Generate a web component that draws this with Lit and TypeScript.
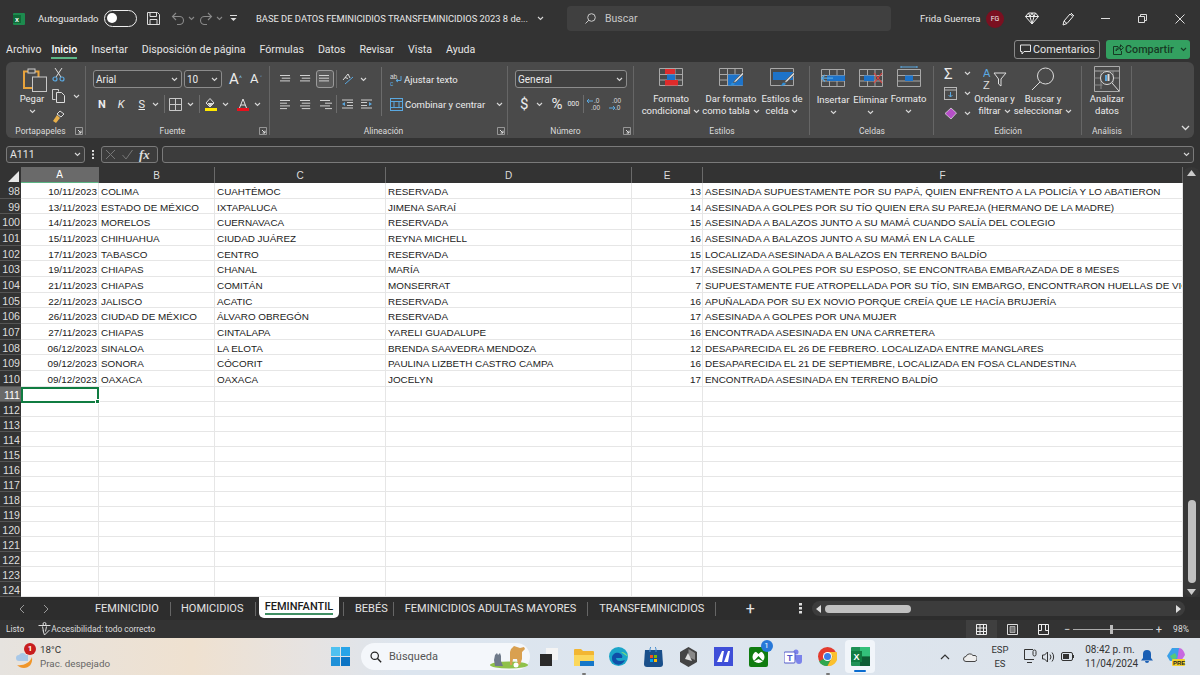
import { LitElement, html, css, svg } from "lit";
import { customElement } from "lit/decorators.js";

const rows: string[][] = [
  ["98","10/11/2023","COLIMA","CUAHTÉMOC","RESERVADA","13","ASESINADA SUPUESTAMENTE POR SU PAPÁ, QUIEN ENFRENTO A LA POLICÍA Y LO ABATIERON"],
  ["99","13/11/2023","ESTADO DE MÉXICO","IXTAPALUCA","JIMENA SARAÍ","14","ASESINADA A GOLPES POR SU TÍO QUIEN ERA SU PAREJA (HERMANO DE LA MADRE)"],
  ["100","14/11/2023","MORELOS","CUERNAVACA","RESERVADA","15","ASESINADA A BALAZOS JUNTO A SU MAMÁ CUANDO SALÍA DEL COLEGIO"],
  ["101","15/11/2023","CHIHUAHUA","CIUDAD JUÁREZ","REYNA MICHELL","16","ASESINADA A BALAZOS JUNTO A SU MAMÁ EN LA CALLE"],
  ["102","17/11/2023","TABASCO","CENTRO","RESERVADA","15","LOCALIZADA ASESINADA A BALAZOS EN TERRENO BALDÍO"],
  ["103","19/11/2023","CHIAPAS","CHANAL","MARÍA","17","ASESINADA A GOLPES POR SU ESPOSO, SE ENCONTRABA EMBARAZADA DE 8 MESES"],
  ["104","21/11/2023","CHIAPAS","COMITÁN","MONSERRAT","7","SUPUESTAMENTE FUE ATROPELLADA POR SU TÍO, SIN EMBARGO, ENCONTRARON HUELLAS DE VIOLENCIA"],
  ["105","22/11/2023","JALISCO","ACATIC","RESERVADA","16","APUÑALADA POR SU EX NOVIO PORQUE CREÍA QUE LE HACÍA BRUJERÍA"],
  ["106","26/11/2023","CIUDAD DE MÉXICO","ÁLVARO OBREGÓN","RESERVADA","17","ASESINADA A GOLPES POR UNA MUJER"],
  ["107","27/11/2023","CHIAPAS","CINTALAPA","YARELI GUADALUPE","16","ENCONTRADA ASESINADA EN UNA CARRETERA"],
  ["108","06/12/2023","SINALOA","LA ELOTA","BRENDA SAAVEDRA MENDOZA","12","DESAPARECIDA EL 26 DE FEBRERO. LOCALIZADA ENTRE MANGLARES"],
  ["109","09/12/2023","SONORA","CÓCORIT","PAULINA LIZBETH CASTRO CAMPA","16","DESAPARECIDA EL 21 DE SEPTIEMBRE, LOCALIZADA EN FOSA CLANDESTINA"],
  ["110","09/12/2023","OAXACA","OAXACA","JOCELYN","17","ENCONTRADA ASESINADA EN TERRENO BALDÍO"],
];
const empties = Array.from({ length: 14 }, (_, i) => String(111 + i));

const chev = (c = "#d8d8d8") => html`<svg class="chev" width="7" height="5" viewBox="0 0 7 5"><path d="M1 1l2.5 2.5L6 1" fill="none" stroke=${c} stroke-width="1.1"/></svg>`;
const launcher = html`<svg class="launch" width="8" height="8" viewBox="0 0 8 8"><path d="M.5.5h7v7h-7z" fill="none" stroke="#aaa" stroke-width=".8"/><path d="M3 3l3 3M6 3.6V6H3.6" fill="none" stroke="#ddd"/></svg>`;
const lines = (a: number[]) => html`<svg width="12" height="11" viewBox="0 0 12 11">${a.map((w, i) => { const x = w < 0 ? 12 + w : w === 8.5 ? 1.75 : 0; return svg`<path d="M${x} ${1.5 + i * 2.7}h${Math.abs(w)}" stroke="#d0d0d0" stroke-width="1"/>`; })}</svg>`;
const tableIcon = (inner: unknown, w = 24, h = 18) => html`<svg width=${w} height=${h} viewBox="0 0 24 18"><path d="M.5.5h23v17H.5zM.5 6.5h23M.5 12h23M8.5.5v17M16 .5v17" fill="none" stroke="#a8a8a8"/>${inner}</svg>`;
const brush = svg`<path d="M24 4l-8 8-2 3 3-1 8-8z" fill="#d0d0d0" stroke="#444" stroke-width=".6"/><path d="M13 14.5c-1 1-.5 2.4-3 3 2 .6 5 .2 6-2z" fill="#2f8fd8"/>`;

@customElement("app-root")
export class AppRoot extends LitElement {
  static styles = css`
    :host { display:block; width:1200px; height:675px; overflow:hidden; font-family:Roboto,"Noto Sans",sans-serif; color:#e6e6e6; background:#333; }
    .page { display:flex; flex-direction:column; height:675px; }
    svg { display:block; flex:none; }

    .title { height:37px; display:flex; align-items:center; font-size:9.6px; padding-left:13px; }
    .title span { white-space:nowrap; }
    .auto { margin-left:13px; width:61px; }
    .toggle { margin-left:5px; width:33px; height:17px; border:1.5px solid #eee; border-radius:9px; box-sizing:border-box; padding:2px; display:flex; }
    .toggle i { width:10px; height:10px; background:#fff; border-radius:50%; display:block; }
    .save { margin-left:10px; }
    .undo { margin-left:11px; }
    .ch4 { margin-left:3px; }
    .redo { margin-left:4px; }
    .cust { margin-left:7px; }
    .doc { margin-left:19px; width:281px; font-size:9.35px; color:#e8e8e8; }
    .docch { margin-left:0; }
    .search { margin-left:23px; margin-top:-1px; width:324px; height:25px; background:#404040; border-radius:4px; display:flex; align-items:center; padding-left:18px; box-sizing:border-box; gap:9px; font-size:10.5px; color:#c8c8c8; }
    .user { margin-left:29px; width:60px; font-size:9.6px; }
    .avatar { margin-left:6px; width:18px; height:18px; background:#7a1020; border-radius:50%; font-size:7px; display:flex; align-items:center; justify-content:center; color:#eee; }
    .tright { margin-left:21px; display:flex; align-items:center; }
    .tright .i2 { margin-left:23px; }
    .tright .i3 { margin-left:26px; }
    .tright .i4 { margin-left:28px; }
    .tright .i5 { margin-left:28px; }

    .menu { height:25px; display:flex; align-items:center; padding:0 10px 0 6px; font-size:10.6px; gap:14px; box-sizing:border-box; }
    .menu > span { white-space:nowrap; }
    .menu .on { position:relative; color:#fff; font-weight:500; margin-left:-4px; }
    .menu .on::after { content:""; position:absolute; left:0; right:0; bottom:-3px; height:2px; background:#5cb585; }
    .mbtns { margin-left:auto; display:flex; gap:6px; }
    .btn { height:19px; border-radius:3px; display:flex; align-items:center; box-sizing:border-box; font-size:10.8px; white-space:nowrap; }
    .com { width:86px; border:1px solid #8a8a8a; padding-left:5px; gap:2px; }
    .shr { width:84px; background:#33a060; color:#173a24; padding:0 3px 0 7px; font-weight:500; gap:1px; }
    .shr svg:last-child { margin-left:auto; }

    .ribbon { height:76px; margin:0 6px; background:#4a4a4a; border-radius:6px; display:flex; font-size:9.5px; color:#ececec; box-sizing:border-box; position:relative; }
    .grp { position:relative; display:flex; flex-direction:column; box-sizing:border-box; }
    .grp::after { content:""; position:absolute; right:0; top:4px; bottom:3px; width:1px; background:#666; }
    .body { height:61px; display:flex; box-sizing:border-box; }
    .lbl { height:15px; display:grid; grid-template-columns:1fr auto; align-items:center; font-size:8.5px; color:#dcdcdc; box-sizing:border-box; }
    .lbl span { text-align:center; }
    .lbl .launch { margin-right:3px; }
    .g1 { width:80px; } .g2 { width:184px; } .g3 { width:238px; } .g4 { width:126px; }
    .g5 { width:176px; } .g6 { width:124px; } .g7 { width:148px; } .g8 { width:50px; }
    .big { display:flex; flex-direction:column; align-items:center; padding-top:6px; line-height:12.4px; text-align:center; white-space:nowrap; box-sizing:border-box; }
    .big .ic { height:25px; display:flex; align-items:flex-start; }
    .big .nl { display:flex; align-items:center; gap:3px; justify-content:center; height:12.4px; }
    .w66 { width:66px; } .w54 { width:54px; } .w48 { width:48px; } .w38 { width:38px; } .w37 { width:37px; } .w39 { width:39px; } .w60 { width:60px; } .w50 { width:50px; }
    .pad4 { padding-left:4px; }
    .down1 { padding-top:7px; }
    .up2 { margin-top:-2px; }
    .g1 .body { padding-left:6px; }
    .paste { width:40px; }
    .paste .ic { padding-left:6px; }
    .clip { display:flex; flex-direction:column; padding-top:6px; gap:7px; }
    .clip div { display:flex; align-items:center; gap:7px; height:14px; }
    .two { display:flex; flex-direction:column; padding-top:8px; box-sizing:border-box; gap:7px; }
    .r { display:flex; align-items:center; height:18px; }
    .sel { height:18px; border:1px solid #8c8c8c; border-radius:3px; box-sizing:border-box; display:flex; align-items:center; justify-content:space-between; padding:0 3px 0 2px; background:#404040; font-size:10px; }
    .g2 .body { padding-left:7px; }
    .fsel { width:89px; } .ssel { width:38px; margin-left:2px; }
    .Agrow { font-size:15px; margin-left:7px; width:21px; position:relative; line-height:16px; }
    .Agrow.sm { font-size:13px; margin-left:0; }
    .Agrow b { position:absolute; left:10px; top:0; font-size:7px; font-weight:400; color:#7cc0ee; }
    .r2 span { font-size:11px; }
    .n { margin-left:5px; font-weight:700; } .k { margin-left:12px; font-style:italic; } .s { margin-left:14px; text-decoration:underline; }
    .s6 { margin-left:7px; }
    .vs { width:1px; height:18px; background:#6c6c6c; }
    .color { display:flex; flex-direction:column; align-items:center; width:12px; line-height:11px; }
    .color i { display:block; width:12px; height:3px; }
    .al { gap:7px; }
    .g3 .body { padding-left:10px; }
    .g3 .two { width:93px; }
    .pressed { width:18px; height:18px; box-sizing:border-box; border:1px solid #9a9a9a; border-radius:3px; background:#5a5a5a; display:flex; align-items:center; justify-content:center; margin:0 2px 0 0; }
    .wrap { margin-left:8px; display:flex; flex-direction:column; padding-top:8px; gap:7px; }
    .wrap .r { gap:2px; white-space:nowrap; }
    .wrap .r2x svg:last-child { margin-left:9px; }
    .g4 .body { padding-left:7px; }
    .nsel { width:112px; }
    .num { font-size:15px; }
    .small { display:flex; flex-direction:column; padding-top:3px; width:42px; padding-left:10px; box-sizing:border-box; gap:3px; }
    .small div { display:flex; align-items:center; gap:7px; height:17px; }
    .col { position:absolute; right:4px; bottom:7px; }

    .formula { height:29px; display:flex; align-items:center; padding:4px 6px 0; box-sizing:border-box; }
    .fbox { height:17px; box-sizing:border-box; border:1px solid #7a7a7a; border-radius:3px; background:#3c3c3c; display:flex; align-items:center; }
    .name { width:79px; justify-content:space-between; padding:0 3px; font-size:10.5px; }
    .dots { width:16px; display:flex; justify-content:center; }
    .fx { width:57px; padding:0 3px; gap:6px; }
    .fx em { font-family:"Liberation Serif",serif; font-weight:700; font-size:13px; color:#ddd; }
    .input { flex:1; margin-left:4px; justify-content:flex-end; padding-right:3px; }

    .sheet { height:430px; display:flex; background:#333; }
    .grid { width:1183px; display:flex; flex-direction:column; position:relative; overflow:hidden; }
    .hdr, .row { display:grid; grid-template-columns:21px 78px 116px 171px 246px 71px 480px; flex:none; }
    .hdr { height:16px; font-size:10px; color:#ddd; font-family:"Liberation Sans",sans-serif; }
    .hdr div { display:flex; align-items:center; justify-content:center; border-right:1px solid #6a6a6a; box-sizing:border-box; }
    .hdr .active { background:#6a6a6a; border-bottom:1px solid #5cb585; color:#fff; }
    .hdr .corner { border:none; align-items:flex-end; justify-content:flex-end; padding:0 2px 1px 0; }
    .row { background:#fff; color:#1a1a1a; font:9.9px/17px "Liberation Sans",Arial,sans-serif; height:15px; white-space:nowrap; }
    .row.tall { height:15.67px; }
    .row > div { border-right:1px solid #e6e6e6; border-bottom:1px solid #e6e6e6; box-sizing:border-box; overflow:hidden; padding-left:2px; }
    .row > .rh { background:#333; color:#ddd; border-right:none; border-bottom:1px solid #555; text-align:right; padding:0 1px 0 0; font-size:10.6px; }
    .row > .rh.cur { background:#6a6a6a; color:#fff; }
    .row > .rt { text-align:right; padding:0 1px 0 0; }
    .selcell { position:absolute; left:21px; top:219.7px; width:78px; height:16px; border:2px solid #107c41; box-sizing:border-box; pointer-events:none; }
    .selcell i { position:absolute; right:-3px; bottom:-3px; background:#107c41; border:1px solid #fff; box-sizing:content-box; display:block; width:3px; height:3px; }
    .fill { flex:1; background:#fff; }
    .vs-bar { width:17px; display:flex; flex-direction:column; align-items:center; padding:3px 0 2px; box-sizing:border-box; background:#383838; border-radius:8px; }
    .thumb { width:8px; height:83px; background:#c0c0c0; border-radius:4px; margin-top:auto; margin-bottom:6px; margin-left:1px; }

    .tabs { height:23px; display:flex; align-items:center; background:#2d2d2d; font-size:11px; color:#e4e4e4; box-sizing:border-box; }
    .arrows { width:95px; display:flex; gap:18px; padding-left:19px; box-sizing:border-box; }
    .tabs .t { white-space:nowrap; }
    .tabsep { width:1px; height:14px; background:#666; }
    .tab1 { width:75px; } .tab2 { width:84px; padding-left:10px; box-sizing:border-box; } .tab4 { padding:0 5px 0 11px; } .tab5 { padding:0 11px; } .tab6 { padding:0 11px; }
    .tab3 { margin:0 4px 0 3px; width:80px; height:21px; background:#fff; color:#1c1c1c; border-radius:0 0 5px 5px; position:relative; display:flex; justify-content:center; padding-top:3px; box-sizing:border-box; font-weight:500; align-self:flex-start; }
    .tab3::after { content:""; position:absolute; left:6px; right:6px; bottom:3px; height:2px; background:#3f8f63; }
    .plus { margin-left:23px; font-size:16px; width:22px; text-align:center; line-height:16px; }
    .vd { margin-left:38px; }
    .hs { margin-left:10px; width:373px; height:15px; background:#3c3c3c; border-radius:8px; display:flex; align-items:center; padding:0 4px; box-sizing:border-box; }
    .hthumb { width:86px; height:8px; background:#c0c0c0; border-radius:4px; margin-left:4px; }
    .hs svg:last-child { margin-left:auto; }

    .status { height:18px; display:flex; align-items:center; background:#333; font-size:8.4px; color:#ddd; padding-left:6px; box-sizing:border-box; white-space:nowrap; }
    .acc { margin-left:14px; margin-right:0; }
    .views { margin-left:auto; display:flex; align-items:stretch; height:18px; }
    .views div { width:31px; display:flex; align-items:center; justify-content:center; }
    .views .v1 { background:#3f3f3f; }
    .zoom { margin-left:5px; width:98px; display:flex; align-items:center; gap:3px; font-size:11px; }
    .track { flex:1; height:1px; background:#aaa; position:relative; }
    .track i { position:absolute; left:37px; top:-4px; width:3px; height:9px; background:#bbb; display:block; }
    .pct { width:38px; text-align:center; font-size:8.5px; }

    .bar { height:37px; background:linear-gradient(90deg,#e6e3df 0,#efe1d0 16%,#e6e3e2 26%,#dce5ef 34%,#dde5ee 70%,#dce2e9 100%); color:#333; display:flex; align-items:center; font-size:9.8px; box-sizing:border-box; position:relative; }
    .wx { width:331px; display:flex; align-items:center; padding-left:16px; box-sizing:border-box; gap:5px; line-height:14px; }
    .wx small { font-size:9.8px; color:#666; display:block; white-space:nowrap; }
    .wicon { position:relative; width:19px; height:26px; }
    .badge { position:absolute; left:8px; top:-1px; width:12px; height:12px; border-radius:50%; background:#c81e1e; color:#fff; font-size:8px; line-height:12px; text-align:center; font-weight:700; }
    .pill { margin-left:11px; width:169px; height:27px; border-radius:14px; background:#f4f7fb; display:flex; align-items:center; padding:0 1px 0 9px; box-sizing:border-box; gap:7px; font-size:11px; color:#555; }
    .pill svg:last-child { margin-left:auto; }
    .apps { margin-left:2px; display:flex; align-items:center; }
    .app { width:34.8px; height:37px; display:flex; align-items:center; justify-content:center; position:relative; }
    .app.act { background:#f1f5fa; border-radius:4px; height:33px; width:30px; }
    .app.act::after { content:""; position:absolute; left:9px; right:9px; bottom:1px; height:2px; background:#0a6cd0; border-radius:1px; }
    .dot::after { content:""; position:absolute; left:50%; margin-left:-2px; bottom:0; width:4px; height:2px; background:#777; border-radius:1px; }
    .n1 { position:absolute; right:3px; top:2px; width:12px; height:12px; background:#2878d8; color:#fff; border-radius:50%; font-size:8px; line-height:12px; text-align:center; }
    .tray { margin-left:auto; display:flex; align-items:center; padding-right:14px; }
    .lang { margin:0 0 0 8px; width:30px; text-align:center; line-height:14px; font-size:9.5px; }
    .clock { margin-left:11px; width:50px; text-align:center; line-height:14px; font-size:10px; white-space:nowrap; }
    .m13 { margin-left:13px; } .m9 { margin-left:9px; } .m5 { margin-left:5px; } .m6 { margin-left:6px; } .m14 { margin-left:14px; }
  `;

  render() {
    return html`<div class="page">
      ${this.titleBar()}
      ${this.menu()}
      ${this.ribbon()}
      ${this.formula()}
      ${this.sheet()}
      ${this.tabs()}
      ${this.status()}
      ${this.taskbar()}
    </div>`;
  }

  titleBar() {
    return html`<div class="title">
      <svg width="12" height="12" viewBox="0 0 12 12"><rect width="12" height="12" rx="1" fill="#1d8a4e"/><rect x="0" y="2" width="8" height="8" fill="#0f6b38"/><text x="2" y="8.5" font-size="7" font-weight="700" fill="#fff" font-family="Liberation Sans">x</text></svg>
      <span class="auto">Autoguardado</span>
      <div class="toggle"><i></i></div>
      <svg class="save" width="13" height="13" viewBox="0 0 13 13"><path d="M.5.5h10l2 2v10H.5zM3 .5v4h6.500v-4M3 12.500v-5h7v5" fill="none" stroke="#ddd"/></svg>
      <svg class="undo" width="14" height="13" viewBox="0 0 14 13"><path d="M5 1L1.500 4.500 5 8M1.500 4.500h7a4 4 0 010 8H6" fill="none" stroke="#8a8a8a" stroke-width="1.100"/></svg>
      <span class="ch4">${chev("#888")}</span>
      <svg class="redo" width="14" height="13" viewBox="0 0 14 13"><path d="M9 1l3.500 3.500L9 8M12.500 4.500h-7a4 4 0 000 8H8" fill="none" stroke="#8a8a8a" stroke-width="1.100"/></svg>
      <span class="ch4">${chev("#888")}</span>
      <svg class="cust" width="7" height="7" viewBox="0 0 7 7"><path d="M0 .5h7" stroke="#ddd"/><path d="M.5 3l3 3 3-3z" fill="#ddd"/></svg>
      <span class="doc">BASE DE DATOS FEMINICIDIOS TRANSFEMINICIDIOS 2023 8 de... </span>
      <span class="docch">${chev()}</span>
      <div class="search"><svg width="11" height="11" viewBox="0 0 11 11"><circle cx="6.500" cy="4.500" r="3.800" fill="none" stroke="#ccc"/><path d="M3.800 7.200L.5 10.500" stroke="#ccc"/></svg><span>Buscar</span></div>
      <span class="user">Frida Guerrera</span>
      <div class="avatar">FG</div>
      <div class="tright">
        <svg width="14" height="13" viewBox="0 0 14 13"><path d="M3.500 1h7L13.500 4.500 7 12 .5 4.500zM.5 4.500h13M5 4.500L7 12l2-7.500M3.500 1L5 4.500 7 1l2 3.500L10.500 1" fill="none" stroke="#eee"/></svg>
        <svg class="i2" width="13" height="14" viewBox="0 0 13 14"><path d="M1 13l1-4 6-7 3 2.500-6 7zM9 1l3 3M2 9l3 2.500" fill="none" stroke="#eee"/></svg>
        <svg class="i3" width="9" height="1" viewBox="0 0 9 1"><path d="M0 .5h9" stroke="#ddd"/></svg>
        <svg class="i4" width="9" height="9" viewBox="0 0 9 9"><path d="M.5 2.500h6v6h-6zM2.500 2.500v-2h6v6h-2" fill="none" stroke="#ddd"/></svg>
        <svg class="i5" width="10" height="10" viewBox="0 0 10 10"><path d="M.5.5l9 9M9.500.5l-9 9" stroke="#ddd"/></svg>
      </div>
    </div>`;
  }

  menu() {
    return html`<div class="menu">
      <span>Archivo</span><span class="on">Inicio</span><span>Insertar</span><span>Disposición de página</span><span>Fórmulas</span><span>Datos</span><span>Revisar</span><span>Vista</span><span>Ayuda</span>
      <div class="mbtns">
        <div class="btn com"><svg width="11" height="11" viewBox="0 0 11 11"><path d="M.5 1h10v6.500H4L2 10V7.500H.5z" fill="none" stroke="#e6e6e6"/></svg>Comentarios</div>
        <div class="btn shr"><svg width="11" height="11" viewBox="0 0 11 11"><path d="M5 2.500H.5v8h8V7M3 7c0-2.500 2-4 4.500-4V.8l3 2.800-3 2.800V4.500C5.500 4.500 4 5.500 3 7z" fill="none" stroke="#173a24"/></svg>Compartir${chev("#173a24")}</div>
      </div>
    </div>`;
  }

  lbl(t: string, l = false) {
    return html`<div class="lbl"><span>${t}</span>${l ? launcher : ""}</div>`;
  }

  ribbon() {
    return html`<div class="ribbon">
      <div class="grp g1">
        <div class="body">
          <div class="big paste"><div class="ic">
            <svg width="26" height="24" viewBox="0 0 26 24"><path d="M2 3.500h14.500V20H2z" fill="none" stroke="#e8a33c" stroke-width="2"/><rect x="6" y="1" width="7" height="4" fill="#4a4a4a" stroke="#ccc"/><rect x="10.500" y="9" width="14" height="14.500" fill="#4a4a4a" stroke="#c8c8c8"/></svg>
          </div><span>Pegar</span><span class="nl">${chev()}</span></div>
          <div class="clip">
            <div><svg width="13" height="14" viewBox="0 0 13 14"><path d="M3 0l6 9M10 0L4 9" stroke="#ddd"/><circle cx="3" cy="11" r="2" fill="none" stroke="#5aa8e0" stroke-width="1.200"/><circle cx="10" cy="11" r="2" fill="none" stroke="#5aa8e0" stroke-width="1.200"/></svg></div>
            <div><svg width="14" height="14" viewBox="0 0 14 14"><path d="M.5.5h6v2M.5.5v10h3" fill="none" stroke="#ccc"/><path d="M4.500 3.500h5l3 3v7h-8z" fill="none" stroke="#ddd"/></svg>${chev()}</div>
            <div><svg width="13" height="14" viewBox="0 0 13 14"><path d="M8 1l4 3-3 3-4-3z" fill="none" stroke="#ddd"/><path d="M5 5l3 3-4 5-3-2z" fill="#e8b04a"/></svg></div>
          </div>
        </div>
        ${this.lbl("Portapapeles", true)}
      </div>

      <div class="grp g2">
        <div class="body"><div class="two">
          <div class="r"><div class="sel fsel"><span>Arial</span>${chev()}</div><div class="sel ssel"><span>10</span>${chev()}</div><span class="Agrow">A<b>^</b></span><span class="Agrow sm">A<b>˅</b></span></div>
          <div class="r r2"><span class="n">N</span><span class="k">K</span><span class="s">S</span><span class="s6">${chev()}</span><span class="vs" style="margin:0 4px 0 5px"></span>
            <svg width="13" height="13" viewBox="0 0 13 13"><path d="M.5.500h12v12H.5zM6.500.500v12M.5 6.500h12" fill="none" stroke="#c8c8c8"/></svg><span style="margin:0 5px">${chev()}</span><span class="vs"></span>
            <div class="color" style="margin-left:5px"><svg width="12" height="10" viewBox="0 0 12 10"><path d="M5 .5L1 5l4 4 4-4z" fill="none" stroke="#ddd"/><path d="M2.500 5h6L5 8.500z" fill="#ddd"/></svg><i style="background:#ffe800"></i></div><span style="margin:0 8px 0 5px">${chev()}</span>
            <div class="color"><svg width="12" height="10" viewBox="0 0 12 10"><path d="M2.500 10L6 1l3.500 9M4 7h4" fill="none" stroke="#e4e4e4"/></svg><i style="background:#e8101c"></i></div><span style="margin-left:5px">${chev()}</span>
          </div>
        </div></div>
        ${this.lbl("Fuente", true)}
      </div>

      <div class="grp g3">
        <div class="body">
          <div class="two al">
            <div class="r">${lines([10, 8.5, 10])}<span style="width:8px"></span>${lines([10, 8.5, 10])}<span style="width:4px"></span><div class="pressed">${lines([10, 10, 10])}</div><span class="vs"></span>
              <svg style="margin:0 5px" width="13" height="12" viewBox="0 0 13 12"><path d="M1 7L6 1l2 4M3 4.500l3 1" fill="none" stroke="#ddd"/><path d="M3 11l8-7" stroke="#5aa8e0"/></svg>${chev()}</div>
            <div class="r">${lines([10, 7, 10, 7])}<span style="width:8px"></span>${lines([10, 8.500, 10, 8.500])}<span style="width:8px"></span>${lines([10, -7, 10, -7])}<span style="width:4px"></span><span class="vs"></span>
              <svg style="margin:0 8px 0 5px" width="11" height="10" viewBox="0 0 11 10"><path d="M0 1h11M5 3.500h6M5 6.500h6M0 9h11" stroke="#ccc"/><path d="M0 5l3-2v4z" fill="#5aa8e0"/></svg>
              <svg width="11" height="10" viewBox="0 0 11 10"><path d="M0 1h11M0 3.500h6M0 6.500h6M0 9h11" stroke="#ccc"/><path d="M11 5L8 3v4z" fill="#5aa8e0"/></svg></div>
          </div>
          <span class="vs" style="height:49px;margin:5px 0 0 8px"></span>
          <div class="wrap">
            <div class="r"><svg width="12" height="13" viewBox="0 0 12 13"><text x="0" y="6" font-size="6.500" fill="#ddd" font-family="Liberation Sans">ab</text><text x="0" y="12.500" font-size="6.500" fill="#5aa8e0" font-family="Liberation Sans">c</text><path d="M11 3v4.500H6M8 9L6 7.500 8 6" fill="none" stroke="#5aa8e0"/></svg><span>Ajustar texto</span></div>
            <div class="r r2x"><svg width="13" height="13" viewBox="0 0 13 13"><rect x=".5" y=".5" width="12" height="12" fill="none" stroke="#5aa8e0"/><path d="M.5 3.500h12M.5 9.500h12M4 3.500v6M9 3.500v6" stroke="#5aa8e0" fill="none"/></svg><span>Combinar y centrar</span>${chev()}</div>
          </div>
        </div>
        ${this.lbl("Alineación", true)}
      </div>

      <div class="grp g4">
        <div class="body"><div class="two">
          <div class="r"><div class="sel nsel"><span>General</span>${chev()}</div></div>
          <div class="r"><span class="num" style="margin-left:5px">$</span><span style="margin-left:8px">${chev()}</span><span class="num" style="margin-left:8px">%</span><span style="margin-left:5px;font-size:7px">000</span><span class="vs" style="margin:0 3px 0 4px"></span>
            <svg width="17" height="14" viewBox="0 0 17 14"><text x="7" y="6" font-size="6.500" fill="#ddd" font-family="Liberation Sans">.0</text><text x="4" y="13" font-size="6.500" fill="#ddd" font-family="Liberation Sans">.00</text><path d="M6 4H0M2 2L0 4l2 2" fill="none" stroke="#5aa8e0"/></svg>
            <svg style="margin-left:5px" width="13" height="14" viewBox="0 0 13 14"><text x="3" y="6" font-size="6.500" fill="#ddd" font-family="Liberation Sans">.00</text><text x="6" y="13" font-size="6.500" fill="#ddd" font-family="Liberation Sans">.0</text><path d="M0 11h6M4 9l2 2-2 2" fill="none" stroke="#5aa8e0"/></svg></div>
        </div></div>
        ${this.lbl("Número", true)}
      </div>

      <div class="grp g5">
        <div class="body pad4">
          <div class="big w66"><div class="ic">${tableIcon(svg`<path d="M6 1h10v5H6zM6 12h13v5.500H6z" fill="#e02b2b"/><path d="M8 6.500h8V12H8z" fill="#1d73c9"/>`)}</div><span>Formato</span><span class="nl">condicional ${chev()}</span></div>
          <div class="big w54"><div class="ic">${tableIcon(svg`<path d="M9 6.500h15v11H9z" fill="#1d73c9"/>${brush}`)}</div><span>Dar formato</span><span class="nl">como tabla ${chev()}</span></div>
          <div class="big w48"><div class="ic"><svg width="24" height="18" viewBox="0 0 24 18"><path d="M.5.5h23v17H.5z" fill="none" stroke="#a8a8a8"/><path d="M3 4h20v8H3z" fill="#1d73c9"/>${brush}</svg></div><span>Estilos de</span><span class="nl">celda ${chev()}</span></div>
        </div>
        ${this.lbl("Estilos")}
      </div>

      <div class="grp g6">
        <div class="body pad4">
          <div class="big w38 down1"><div class="ic">${tableIcon(svg`<path d="M6 6.500h18V12H6z" fill="#1d73c9"/><path d="M12 9.200H1M4 6L.5 9.200 4 12.500" fill="none" stroke="#5aa8e0" stroke-width="1.200"/>`)}</div><span>Insertar</span><span class="nl">${chev()}</span></div>
          <div class="big w37 down1"><div class="ic">${tableIcon(svg`<path d="M5 6.500h10V12H5z" fill="#1d73c9"/><path d="M15 4l8 10M23 4l-8 10" stroke="#e04040" stroke-width="1.200"/>`)}</div><span>Eliminar</span><span class="nl">${chev()}</span></div>
          <div class="big w39"><div class="ic"><svg class="up2" width="24" height="21" viewBox="0 0 24 21"><path d="M4 1h16M4 0v2M20 0v2" stroke="#5aa8e0"/><path d="M.5 3.500h23v17H.5zM.5 9.500h23M.5 15h23" fill="none" stroke="#a8a8a8"/><path d="M8 9.500h8V15H8z" fill="#1d73c9"/></svg></div><span>Formato</span><span class="nl">${chev()}</span></div>
        </div>
        ${this.lbl("Celdas")}
      </div>

      <div class="grp g7">
        <div class="body">
          <div class="small">
            <div><span style="font-size:15px;line-height:14px;width:13px">Σ</span>${chev()}</div>
            <div><svg width="13" height="13" viewBox="0 0 13 13"><rect x=".5" y=".5" width="12" height="12" fill="none" stroke="#b8b8b8"/><path d="M.5 3h12" stroke="#b8b8b8"/><path d="M6.500 5v5M4.500 8l2 2 2-2" fill="none" stroke="#5aa8e0"/></svg>${chev()}</div>
            <div><svg width="13" height="13" viewBox="0 0 13 13"><path d="M7 1l5.500 5L7 12 1 6.500z" fill="#b64fc8" stroke="#d8d8d8" stroke-width=".8"/></svg>${chev()}</div>
          </div>
          <div class="big w37" style="padding-top:5px"><div class="ic" style="height:26px"><svg width="24" height="23" viewBox="0 0 24 23"><text x="0" y="10" font-size="11" fill="#5aa8e0" font-family="Liberation Sans">A</text><text x="0" y="22" font-size="11" fill="#ddd" font-family="Liberation Sans">Z</text><path d="M11 6h12l-5 6v7l-2.500-2v-5z" fill="none" stroke="#ddd"/></svg></div><span>Ordenar y</span><span class="nl">filtrar ${chev()}</span></div>
          <div class="big w60" style="padding-top:5px"><div class="ic" style="height:26px"><svg width="24" height="24" viewBox="0 0 24 24"><circle cx="14.500" cy="9" r="8" fill="none" stroke="#ddd"/><path d="M9 15L1 23" stroke="#ddd"/></svg></div><span>Buscar y</span><span class="nl">seleccionar ${chev()}</span></div>
        </div>
        ${this.lbl("Edición")}
      </div>

      <div class="grp g8">
        <div class="body">
          <div class="big w50" style="padding-top:4px"><div class="ic" style="height:27px"><svg width="26" height="26" viewBox="0 0 26 26"><path d="M.5.5h25v25H.5zM.5 5h25" fill="none" stroke="#aaa"/><path d="M7 5v18M19 5v12M.5 12h6M19 12h6M.5 19h8" stroke="#888"/><circle cx="13" cy="12" r="6.500" fill="#4a4a4a" stroke="#ddd"/><path d="M11 9h2v6h-2z" fill="#5aa8e0"/><path d="M13.500 8h2v7h-2z" fill="#ddd"/><path d="M18 17l7 8" stroke="#ddd"/></svg></div><span>Analizar</span><span>datos</span></div>
        </div>
        ${this.lbl("Análisis")}
      </div>
      <svg class="col" width="9" height="6" viewBox="0 0 9 6"><path d="M1 1l3.500 3.500L8 1" fill="none" stroke="#ddd" stroke-width="1.300"/></svg>
    </div>`;
  }

  formula() {
    return html`<div class="formula">
      <div class="fbox name"><span>A111</span>${chev()}</div>
      <div class="dots"><svg width="2" height="9" viewBox="0 0 2 9"><path d="M0 0h2v2H0zM0 3.500h2v2H0zM0 7h2v2H0z" fill="#ddd"/></svg></div>
      <div class="fbox fx">
        <svg width="11" height="11" viewBox="0 0 11 11"><path d="M1 1l9 9M10 1l-9 9" stroke="#777"/></svg>
        <svg width="11" height="11" viewBox="0 0 11 11"><path d="M.5 6l3.500 4L10.500 1" fill="none" stroke="#777"/></svg>
        <em>fx</em>
      </div>
      <div class="fbox input">${chev()}</div>
    </div>`;
  }

  sheet() {
    const cols = ["A", "B", "C", "D", "E", "F"];
    return html`<div class="sheet">
      <div class="grid">
        <div class="hdr">
          <div class="corner"><svg width="11" height="11" viewBox="0 0 11 11"><path d="M11 0v11H0z" fill="#e8e8e8"/></svg></div>
          ${cols.map((c, i) => html`<div class=${i === 0 ? "active" : ""}>${c}</div>`)}
        </div>
        ${rows.map((r) => html`<div class="row tall">
          <div class="rh">${r[0]}</div>
          <div class="rt">${r[1]}</div><div>${r[2]}</div><div>${r[3]}</div><div>${r[4]}</div>
          <div class="rt">${r[5]}</div><div>${r[6]}</div>
        </div>`)}
        ${empties.map((n) => html`<div class="row">
          <div class="rh ${n === "111" ? "cur" : ""}">${n}</div>
          <div></div><div></div><div></div><div></div><div></div><div></div>
        </div>`)}
        <div class="fill"></div>
        <div class="selcell"><i></i></div>
      </div>
      <div class="vs-bar">
        <svg width="9" height="6" viewBox="0 0 9 6"><path d="M4.500 0L9 6H0z" fill="#ccc"/></svg>
        <div class="thumb"></div>
        <svg width="9" height="6" viewBox="0 0 9 6"><path d="M4.500 6L0 0h9z" fill="#ccc"/></svg>
      </div>
    </div>`;
  }

  tabs() {
    return html`<div class="tabs">
      <div class="arrows">
        <svg width="6" height="10" viewBox="0 0 6 10"><path d="M5 1L1 5l4 4" fill="none" stroke="#999"/></svg>
        <svg width="6" height="10" viewBox="0 0 6 10"><path d="M1 1l4 4-4 4" fill="none" stroke="#999"/></svg>
      </div>
      <span class="t tab1">FEMINICIDIO</span><span class="tabsep"></span>
      <span class="t tab2">HOMICIDIOS</span><span class="tabsep"></span>
      <span class="t tab3">FEMINFANTIL</span><span class="tabsep"></span>
      <span class="t tab4">BEBÉS</span><span class="tabsep"></span>
      <span class="t tab5">FEMINICIDIOS ADULTAS MAYORES</span><span class="tabsep"></span>
      <span class="t tab6">TRANSFEMINICIDIOS</span><span class="tabsep"></span>
      <span class="plus">+</span>
      <svg class="vd" width="3" height="11" viewBox="0 0 3 11"><path d="M0 0h3v2.500H0zM0 4h3v2.500H0zM0 8h3v2.500H0z" fill="#ddd"/></svg>
      <div class="hs">
        <svg width="5" height="8" viewBox="0 0 5 8"><path d="M5 0v8L0 4z" fill="#ddd"/></svg>
        <div class="hthumb"></div>
        <svg width="5" height="8" viewBox="0 0 5 8"><path d="M0 0v8l5-4z" fill="#ddd"/></svg>
      </div>
    </div>`;
  }

  status() {
    return html`<div class="status">
      <span>Listo</span>
      <svg class="acc" width="13" height="14" viewBox="0 0 13 14"><circle cx="6.500" cy="2" r="1.500" fill="none" stroke="#ddd"/><path d="M.5 3.500h12M4.500 4.500l1 5M8.500 4.500l-1 5M5 8.500L6.500 13l5-5" fill="none" stroke="#ddd"/></svg>
      <span>Accesibilidad: todo correcto</span>
      <div class="views">
        <div class="v1"><svg width="11" height="11" viewBox="0 0 11 11"><path d="M.5.5h10v10H.5zM.5 4h10M.5 7.500h10M4 .5v10M7.500.5v10" fill="none" stroke="#eee"/></svg></div>
        <div><svg width="11" height="11" viewBox="0 0 11 11"><path d="M.5.5h10v10H.5z" fill="none" stroke="#ddd"/><path d="M3 2.500h5v6H3z" fill="#777" stroke="#ddd" stroke-width=".6"/></svg></div>
        <div><svg width="11" height="11" viewBox="0 0 11 11"><path d="M.5.5h10v10H.5zM.5 6.500H3.500V.5M7.500.5v6h3" fill="none" stroke="#eee"/></svg></div>
      </div>
      <div class="zoom"><span>−</span><div class="track"><i></i></div><span>+</span></div>
      <span class="pct">98%</span>
    </div>`;
  }

  taskbar() {
    return html`<div class="bar">
      <div class="wx">
        <div class="wicon">
          <svg width="19" height="26" viewBox="0 0 19 26"><path d="M16 13c1 7-3 11-8 11-3 0-5-1-7-3 6 1 13-2 15-8z" fill="#f0962a"/><path d="M3 17a3 3 0 010-6 4 4 0 017 0h2v6z" fill="#a8c8e8"/></svg>
          <div class="badge">1</div>
        </div>
        <div><span>18°C</span><small>Prac. despejado</small></div>
      </div>
      <svg width="19" height="19" viewBox="0 0 19 19"><path d="M0 0h9v9H0z" fill="#4fc1f0"/><path d="M10 0h9v9h-9z" fill="#28a4e8"/><path d="M0 10h9v9H0z" fill="#1e90d8"/><path d="M10 10h9v9h-9z" fill="#0c74c4"/></svg>
      <div class="pill">
        <svg width="12" height="12" viewBox="0 0 14 14"><circle cx="5.500" cy="5.500" r="4.300" fill="none" stroke="#222" stroke-width="1.400"/><path d="M8.500 8.500L13 13" stroke="#222" stroke-width="1.600"/></svg>
        <span>Búsqueda</span>
        <svg width="40" height="25" viewBox="0 0 40 25"><ellipse cx="20" cy="21" rx="19" ry="3.500" fill="#8fc14a"/><path d="M6 11l2-2 1 2 2-2 1 3v5l2 5H6l-1-6z" fill="#6f7a8a"/><path d="M22 5l3-3 6 2 4-1 1 2-3 3v7l-2 6h-2l-1-6h-4l-1 6h-2V8z" fill="#d9a050"/><circle cx="27" cy="21" r="2.500" fill="#fff"/></svg>
      </div>
      <div class="apps">
        <div class="app"><svg width="18" height="18" viewBox="0 0 18 18"><path d="M6 0h12v12H10v6H0V8h6z" fill="#d8d8d8"/><path d="M0 6h12v12H0z" fill="#2a2a2a"/><path d="M6 0h12v12h-6V6H6z" fill="#f4f4f4"/></svg></div>
        <div class="app dot"><svg width="20" height="18" viewBox="0 0 20 18"><path d="M0 2a1 1 0 011-1h6l2 2h10a1 1 0 011 1v13H0z" fill="#f2b632"/><path d="M0 7h20v11H0z" fill="#fbd75b"/><path d="M6 13h14v5H6z" fill="#1677c8"/></svg></div>
        <div class="app"><svg width="19" height="19" viewBox="0 0 19 19"><circle cx="9.500" cy="9.500" r="9.500" fill="#1ba5c9"/><path d="M3 11c0-4 4-6 7-5 3 1 4 3 3 5H7c0 3 4 4 9 2-2 5-8 6-11 3-1.500-1-2-3-2-5z" fill="#0f4fa8"/><path d="M12 5c3 0 6 2 7 5-1-1-4-3-7-5z" fill="#7ae07a"/></svg></div>
        <div class="app"><svg width="19" height="20" viewBox="0 0 19 20"><path d="M1 3h17l1 14a3 3 0 01-3 3H3a3 3 0 01-3-3z" fill="#1a4f8a"/><path d="M6 5V2a3 3 0 016 0v3" fill="none" stroke="#4a90d0"/><path d="M6 8h3v3H6z" fill="#f25022"/><path d="M10 8h3v3h-3z" fill="#7fba00"/><path d="M6 12h3v3H6z" fill="#00a4ef"/><path d="M10 12h3v3h-3z" fill="#ffb900"/></svg></div>
        <div class="app"><svg width="17" height="20" viewBox="0 0 17 20"><path d="M8.500 0L17 5v10l-8.500 5L0 15V5z" fill="#444"/><path d="M8.500 2L15 6v7l-6.500-3z" fill="#888"/><path d="M5 12l3-6 4 8z" fill="#ddd"/></svg></div>
        <div class="app"><svg width="19" height="19" viewBox="0 0 19 19"><rect width="19" height="19" fill="#3f4fd8"/><path d="M3 15L8 4h2l-2 11zM10 15l4-11h2l-2 11z" fill="#fff"/></svg></div>
        <div class="app"><svg width="19" height="20" viewBox="0 0 19 20"><rect width="19" height="20" rx="2" fill="#107c10"/><circle cx="9.500" cy="10" r="6" fill="#fff"/><path d="M4 15l5.500-6 5.500 6-5.500-3zM6 4l3.500 3L13 4l-3.500-1z" fill="#107c10"/></svg><div class="n1">1</div></div>
        <div class="app"><svg width="18" height="16" viewBox="0 0 18 16"><circle cx="12" cy="3" r="2.500" fill="#7b83eb"/><path d="M9 6h9v6a3 3 0 01-6 0z" fill="#7b83eb"/><rect x="0" y="3" width="11" height="11" rx="1" fill="#fff" stroke="#5059c9"/><text x="3" y="12" font-size="9" font-weight="700" fill="#5059c9" font-family="Liberation Sans">T</text></svg></div>
        <div class="app dot"><svg width="19" height="19" viewBox="0 0 19 19"><circle cx="9.500" cy="9.500" r="9.500" fill="#e33b2e"/><path d="M9.500 9.500L1 14.500A9.500 9.500 0 009.500 19l5-9.500z" fill="#2fa84f"/><path d="M9.500 5h9a9.500 9.500 0 01-9 14l5-9.500z" fill="#fbc02d"/><circle cx="9.500" cy="9.500" r="4.500" fill="#fff"/><circle cx="9.500" cy="9.500" r="3.500" fill="#3b7de8"/></svg></div>
        <div class="app act"><svg width="19" height="19" viewBox="0 0 19 19"><rect width="19" height="19" rx="1" fill="#1f9256"/><path d="M9 0h10v9.500H9z" fill="#33c07a"/><path d="M9 9.500h10V19H9z" fill="#0e5c34"/><rect y="4" width="11" height="11" fill="#107c41"/><text x="2.500" y="13" font-size="9" font-weight="700" fill="#fff" font-family="Liberation Sans">X</text></svg></div>
      </div>
      <div class="tray">
        <svg width="10" height="6" viewBox="0 0 10 6"><path d="M1 5l4-4 4 4" fill="none" stroke="#333" stroke-width="1.200"/></svg>
        <svg class="m13" width="14" height="10" viewBox="0 0 14 10"><path d="M3 9.500a2.500 2.500 0 010-5 4 4 0 017-1 3 3 0 012 6z" fill="#eee" stroke="#444"/></svg>
        <div class="lang">ESP<br />ES</div>
        <svg class="m9" width="13" height="15" viewBox="0 0 13 15"><path d="M10 10.500H.5V.5H9M3 13.500h5" fill="none" stroke="#333"/><rect x="9" y="1" width="3" height="6" rx="1.500" fill="none" stroke="#333"/></svg>
        <svg class="m5" width="13" height="12" viewBox="0 0 13 12"><path d="M.5 4v4h2l3 3V1l-3 3z" fill="none" stroke="#333"/><path d="M8 3.500a4 4 0 010 5M10 1.500a7 7 0 010 9" fill="none" stroke="#333"/></svg>
        <svg class="m6" width="13" height="9" viewBox="0 0 13 9"><rect x=".5" y=".5" width="11" height="8" rx="1.500" fill="none" stroke="#333"/><rect x="2" y="2" width="6" height="5" fill="#333"/><path d="M12.500 3v3" stroke="#333"/></svg>
        <div class="clock">08:42 p. m.<br />11/04/2024</div>
        <svg class="m6" width="12" height="13" viewBox="0 0 12 13"><path d="M6 0a4 4 0 014 4v4l2 2.500H0L2 8V4a4 4 0 014-4z" fill="#1a5fb4"/><path d="M4 11h4a2 2 0 01-4 0z" fill="#1a5fb4"/></svg>
        <svg class="m14" width="19" height="20" viewBox="0 0 19 20"><path d="M5 1h7l2 6-4 7H3L0 9z" fill="#3aa0e8"/><path d="M12 1c3 0 5 3 6 7l-4 6h-4z" fill="#c868e0"/><path d="M3 9l5-3 2 4-4 4z" fill="#58c878"/><rect x="5" y="12" width="13" height="7" rx="1" fill="#f2d02e"/><text x="6" y="18" font-size="6" font-weight="700" fill="#222" font-family="Liberation Sans">PRE</text></svg>
      </div>
    </div>`;
  }
}
